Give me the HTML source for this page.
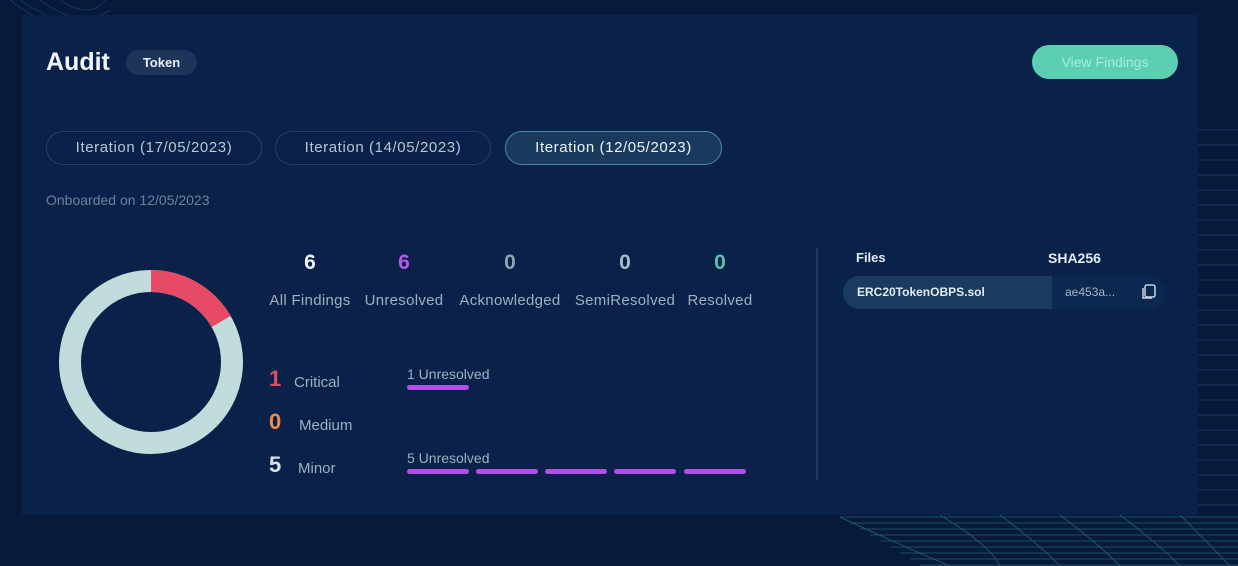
<!DOCTYPE html>
<html><head><style>
*{margin:0;padding:0;box-sizing:border-box}
body{width:1238px;height:566px;background:#071a3c;font-family:"Liberation Sans",sans-serif;position:relative;overflow:hidden;color:#e6eef5}
.card{position:absolute;left:22px;top:15px;width:1176px;height:500px;background:#0a2149}
.abs{position:absolute}
.pill{position:absolute;top:131px;height:34px;border:1px solid #24406a;border-radius:17px;font-size:15px;letter-spacing:0.6px;color:#b9c6d4;text-align:center;line-height:32px}
.num{position:absolute;font-size:21px;font-weight:bold;text-align:center;width:120px}
.lbl{position:absolute;font-size:15px;letter-spacing:0.3px;color:#9fb0c2;text-align:center;width:140px;top:292px}
.bar{position:absolute;height:5px;background:#b34ee8;border-radius:3px;top:469px;width:62px}
</style></head><body>
<svg class="abs" style="left:0;top:0" width="130" height="40"><g stroke="#2c5d80" fill="none" stroke-width="0.7" opacity=".6"><path d="M10 0 Q60 40 120 30"/><path d="M20 0 Q70 35 115 20"/><path d="M40 0 Q80 30 110 10"/><path d="M60 0 Q90 20 105 0"/></g></svg>
<div class="card"></div>
<svg class="abs" style="left:1198px;top:120px" width="40" height="400"><g stroke="#3c6e8e" stroke-width="0.8" opacity=".5"><path d="M0 10H40M0 25H40M0 40H40M0 55H40M0 70H40M0 85H40M0 100H40M0 115H40M0 130H40M0 145H40M0 160H40M0 175H40M0 190H40M0 205H40M0 220H40M0 235H40M0 250H40M0 265H40M0 280H40M0 295H40M0 310H40M0 325H40M0 340H40M0 355H40M0 370H40M0 385H40"/></g></svg>
<svg class="abs" style="left:840px;top:515px" width="398" height="51"><g stroke="#3aa7a8" fill="none" stroke-width="0.8" opacity=".5"><path d="M0 2 Q60 30 110 51"/><path d="M0 2H398M10 8H398M20 14H398M30 20H398M40 26H398M50 32H398M60 38H398M70 44H398M80 50H398"/><path d="M100 0 Q150 30 160 51M160 0 Q200 30 220 51M220 0 Q260 30 280 51M280 0 Q320 30 340 51M340 0 Q370 30 390 51"/></g></svg>
<div class="abs" style="left:46px;top:48px;font-size:25px;font-weight:bold;color:#f2f6fa">Audit</div>
<div class="abs" style="left:126px;top:50px;width:71px;height:25px;border-radius:13px;background:#1d3559;font-size:13px;font-weight:bold;text-align:center;line-height:25px;color:#e8eef4">Token</div>
<div class="abs" style="left:1032px;top:45px;width:146px;height:34px;border-radius:17px;background:#5ccfb2;font-size:14px;color:#a8ecdc;text-align:center;line-height:34px">View Findings</div>
<div class="pill" style="left:46px;width:216px">Iteration (17/05/2023)</div>
<div class="pill" style="left:275px;width:216px">Iteration (14/05/2023)</div>
<div class="pill" style="left:505px;width:217px;background:#193a5c;border-color:#4e8a9e;color:#eef4f8">Iteration (12/05/2023)</div>
<div class="abs" style="left:46px;top:192px;font-size:14px;color:#6f819a">Onboarded on 12/05/2023</div>
<svg class="abs" style="left:59px;top:270px" width="184" height="184"><circle cx="92" cy="92" r="81" fill="none" stroke="#c2dcdc" stroke-width="22"/><circle cx="92" cy="92" r="81" fill="none" stroke="#e64a65" stroke-width="22" stroke-dasharray="84.8 500" transform="rotate(-90 92 92)"/></svg>
<div class="num" style="left:250px;top:251px;color:#f0f4f8">6</div>
<div class="num" style="left:344px;top:251px;color:#b458ea">6</div>
<div class="num" style="left:450px;top:251px;color:#8ea3b8">0</div>
<div class="num" style="left:565px;top:251px;color:#a9bccb">0</div>
<div class="num" style="left:660px;top:251px;color:#55c4b0">0</div>
<div class="lbl" style="left:240px">All Findings</div>
<div class="lbl" style="left:334px">Unresolved</div>
<div class="lbl" style="left:440px">Acknowledged</div>
<div class="lbl" style="left:555px">SemiResolved</div>
<div class="lbl" style="left:650px">Resolved</div>
<div class="abs" style="left:269px;top:366px;font-size:22px;font-weight:bold;color:#e64a65">1</div>
<div class="abs" style="left:294px;top:374px;font-size:15px;color:#9fb0c2">Critical</div>
<div class="abs" style="left:269px;top:409px;font-size:22px;font-weight:bold;color:#ee8a4c">0</div>
<div class="abs" style="left:299px;top:417px;font-size:15px;color:#9fb0c2">Medium</div>
<div class="abs" style="left:269px;top:452px;font-size:22px;font-weight:bold;color:#d8e2ec">5</div>
<div class="abs" style="left:298px;top:460px;font-size:15px;color:#9fb0c2">Minor</div>
<div class="abs" style="left:407px;top:366px;font-size:14px;color:#9fb0c2">1 Unresolved</div>
<div class="bar" style="left:407px;top:385px"></div>
<div class="abs" style="left:407px;top:450px;font-size:14px;color:#9fb0c2">5 Unresolved</div>
<div class="bar" style="left:407px"></div><div class="bar" style="left:476px"></div><div class="bar" style="left:545px"></div><div class="bar" style="left:614px"></div><div class="bar" style="left:684px"></div>
<div class="abs" style="left:816px;top:248px;width:2px;height:232px;background:#1f3a60"></div>
<div class="abs" style="left:856px;top:250px;font-size:13px;font-weight:bold;color:#e4ebf2">Files</div>
<div class="abs" style="left:1048px;top:250px;font-size:14px;font-weight:bold;color:#e4ebf2">SHA256</div>
<div class="abs" style="left:843px;top:276px;width:322px;height:33px;border-radius:17px;background:#0d2850;overflow:hidden"><div style="width:209px;height:33px;background:#1b3a60"></div></div>
<div class="abs" style="left:857px;top:285px;font-size:12px;font-weight:bold;color:#e4ebf2">ERC20TokenOBPS.sol</div>
<div class="abs" style="left:1065px;top:285px;font-size:12px;color:#a6b6c6">ae453a...</div>
<svg class="abs" style="left:1140px;top:283px" width="18" height="18"><rect x="5" y="2" width="10" height="12" rx="2" fill="none" stroke="#c8d4e0" stroke-width="1.5"/><path d="M3 5v10h9" fill="none" stroke="#c8d4e0" stroke-width="1.5"/></svg>
</body></html>
